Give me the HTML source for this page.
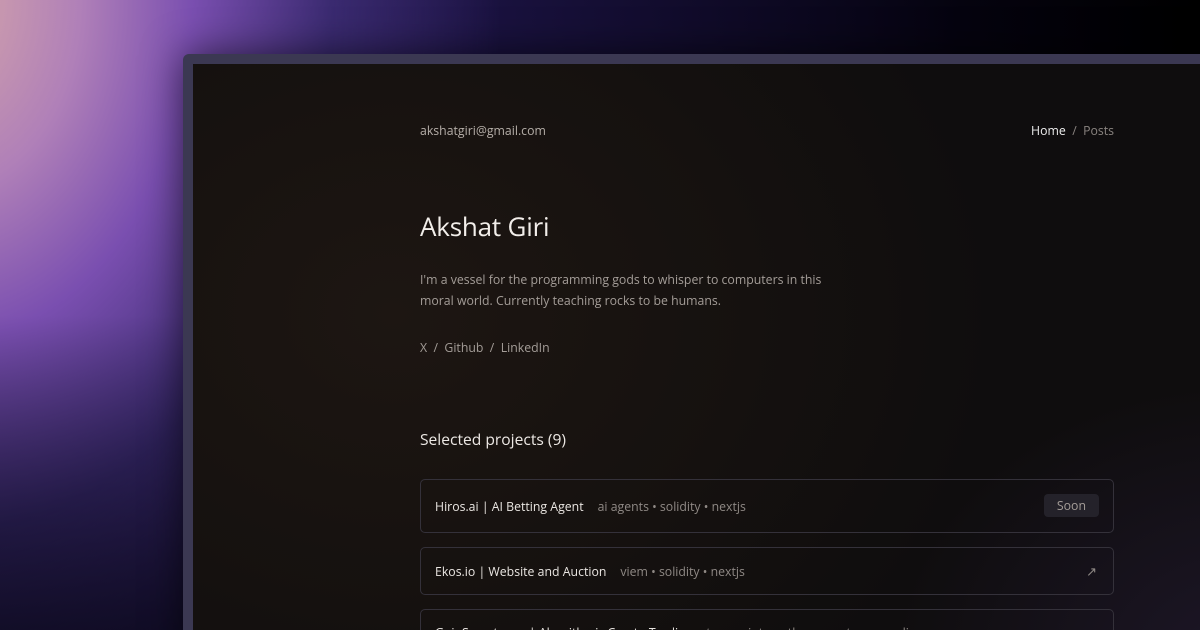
<!DOCTYPE html>
<html><head><meta charset="utf-8"><style>
*{margin:0;padding:0;box-sizing:border-box}
html,body{width:1200px;height:630px;overflow:hidden}
body{position:relative;font-family:"Open Sans","DejaVu Sans","Liberation Sans",sans-serif;
background:
radial-gradient(ellipse 560px 760px at -60px 0px, #d8a8a8 0%, #b080b8 25%, #7a4fb0 45%, #3a2a70 70%, rgba(20,15,45,0) 100%),
linear-gradient(90deg,#2a1a55 0%,#1a1240 40%,#05030f 80%,#000 100%);}
.bg2{position:absolute;inset:0;background:linear-gradient(180deg,rgba(0,0,0,0) 0%,rgba(0,0,0,0) 50%,rgba(10,8,25,.8) 100%);}
.bezel{position:absolute;left:183px;top:54px;width:1040px;height:600px;background:#3b3852;border-radius:6px 0 0 0;box-shadow:0 0 40px rgba(0,0,0,.6)}
.screen{position:absolute;left:193px;top:64px;width:1010px;height:580px;
background:radial-gradient(ellipse 600px 500px at 200px 250px,#1d1612 0%,#15110f 60%,#0f0d0e 100%);overflow:hidden}
.screen:after{content:"";position:absolute;inset:0;background:radial-gradient(ellipse 500px 400px at 1050px 600px,rgba(40,30,60,.55),rgba(0,0,0,0) 70%)}
.c{position:absolute;left:227px;top:0;width:694px;z-index:1}
.email{position:absolute;top:58px;left:0;font-size:12.3px;color:#b5aea8}
.nav{position:absolute;top:58px;right:0;font-size:12.3px;color:#8a8480}
.nav b{font-weight:normal;color:#eee}
h1{position:absolute;top:144px;left:0;font-size:26px;font-weight:normal;color:#f2eeea;letter-spacing:-.2px}
.bio{position:absolute;top:205px;left:0;width:420px;font-size:12.3px;line-height:21px;color:#a49d98}
.links{position:absolute;top:275px;left:0;font-size:12.3px;color:#a49d98}
h2{position:absolute;top:364px;left:0;font-size:15.6px;font-weight:normal;color:#ece8e4}
.row{position:absolute;left:0;width:694px;border:1px solid #34313a;border-radius:5px;font-size:12.3px;color:#eae6e2;padding-left:14px;display:flex;align-items:center}
.row i{font-style:normal;color:#8f8985;margin-left:14px}
.soon{position:absolute;right:14px;top:14px;background:#24222a;color:#a49d98;border-radius:4px;padding:3px 13px;font-size:12.3px}
.arr{position:absolute;right:16px;color:#8f8985;font-size:13px}
</style></head><body>
<div class="bg2"></div>
<div class="bezel"></div>
<div class="screen">
<div class="c">
<div class="email">akshatgiri@gmail.com</div>
<div class="nav"><b>Home</b>&nbsp; / &nbsp;Posts</div>
<h1>Akshat Giri</h1>
<div class="bio">I'm a vessel for the programming gods to whisper to computers in this moral world. Currently teaching rocks to be humans.</div>
<div class="links">X&nbsp; /&nbsp; Github&nbsp; /&nbsp; LinkedIn</div>
<h2>Selected projects (9)</h2>
<div class="row" style="top:415px;height:54px">Hiros.ai | AI Betting Agent<i>ai agents • solidity • nextjs</i><span class="soon">Soon</span></div>
<div class="row" style="top:483px;height:48px">Ekos.io | Website and Auction<i>viem • solidity • nextjs</i><span class="arr">↗</span></div>
<div class="row" style="top:545px;height:48px;align-items:flex-start;padding-top:14px">GoinSecret.com | Algorithmic Crypto Trading<i>typescript • python • postgres • redis</i><span class="arr" style="top:14px">↗</span></div>
</div>
</div>
</body></html>
